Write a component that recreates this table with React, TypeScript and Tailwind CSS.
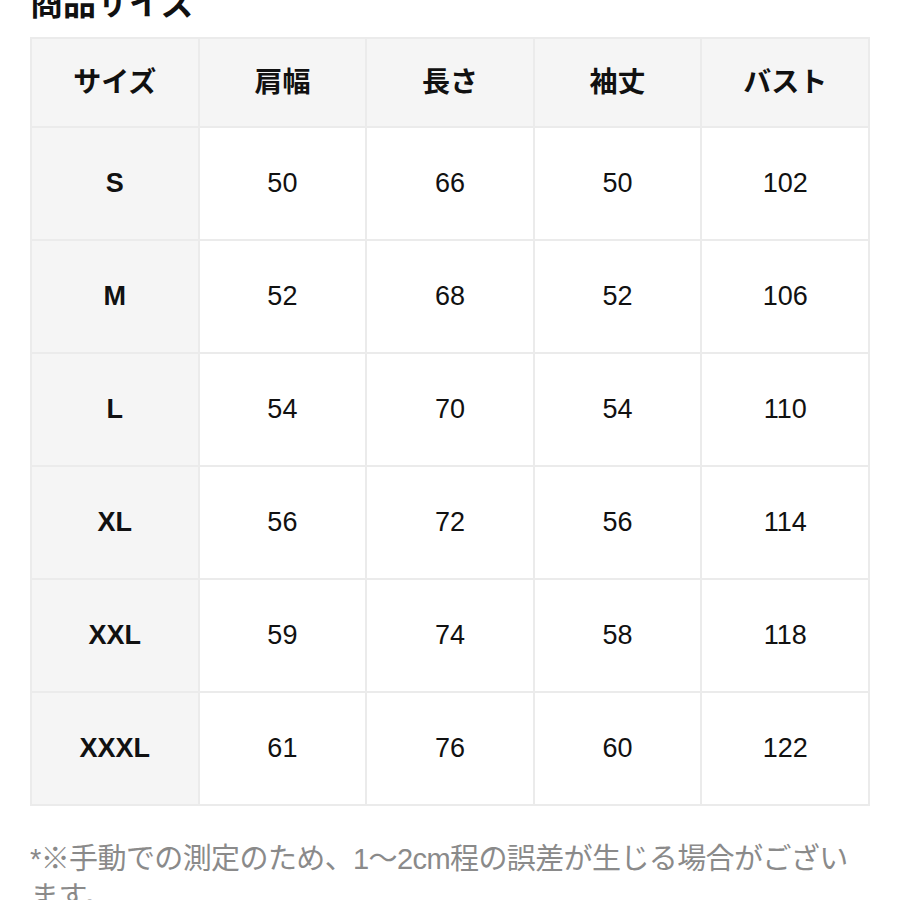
import React from "react";

const headers = ["サイズ", "肩幅", "長さ", "袖丈", "バスト"];

const rows = [
    ["S", "50", "66", "50", "102"],
    ["M", "52", "68", "52", "106"],
    ["L", "54", "70", "54", "110"],
    ["XL", "56", "72", "56", "114"],
    ["XXL", "59", "74", "58", "118"],
    ["XXXL", "61", "76", "60", "122"],
];

export default function App() {
    return (
        <div className="w-[900px] h-[900px] overflow-hidden bg-white px-[30px] font-['Liberation_Sans','Noto_Sans_CJK_JP',sans-serif] text-[#111]">
            <h2 className="-mt-[12px] h-[49px] text-[33px] font-bold leading-[32px]">商品サイズ</h2>

            <table className="w-[840px] table-fixed border-collapse border-2 border-[#ebebeb]">
                <thead>
                    <tr className="h-[89px] bg-[#f5f5f5]">
                        {headers.map((h, i) => (
                            <th key={i} className="border-2 border-[#ebebeb] text-center text-[28px] font-bold">{h}</th>
                        ))}
                    </tr>
                </thead>
                <tbody>
                    {rows.map((r, i) => (
                        <tr key={i} className="h-[113px]">
                            {r.map((c, j) => (
                                <td key={j} className={`border-2 border-[#ebebeb] text-center text-[27px] ${j === 0 ? 'bg-[#f5f5f5] font-bold' : 'bg-white'}`}>{c}</td>
                            ))}
                        </tr>
                    ))}
                </tbody>
            </table>

            <p className="mt-[34px] text-[29px] leading-[38px] text-[#8a8a8a] tracking-[-0.6px]">*※手動での測定のため、1〜2cm程の誤差が生じる場合がございます。</p>
        </div>
    );
}
